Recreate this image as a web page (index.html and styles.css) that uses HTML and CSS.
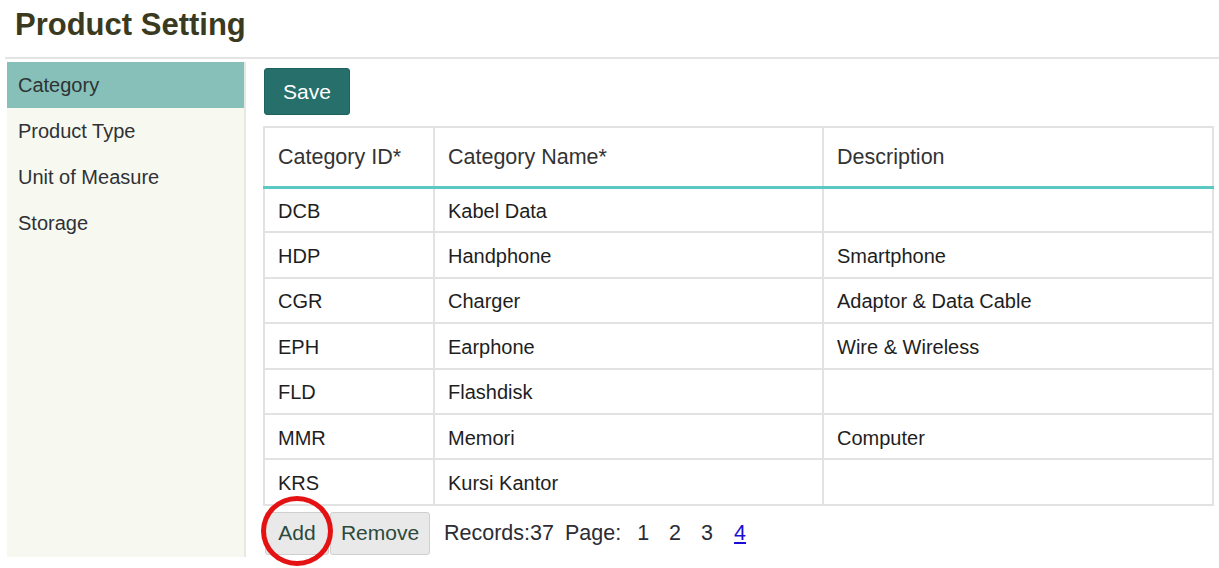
FILE: index.html
```html
<!DOCTYPE html>
<html>
<head>
<meta charset="utf-8">
<link rel="stylesheet" href="styles.css">
</head>
<body>
<div class="page">
  <header class="page-header">
    <h1 class="title">Product Setting</h1>
  </header>
  <div class="divider"></div>
  <div class="main">
    <nav class="sidebar">
      <div class="nav-item active">Category</div>
      <div class="nav-item">Product Type</div>
      <div class="nav-item">Unit of Measure</div>
      <div class="nav-item">Storage</div>
    </nav>
    <section class="content">
      <div class="toolbar">
        <button class="btn-save">Save</button>
      </div>
      <table class="grid">
        <colgroup>
          <col class="c1"><col class="c2"><col class="c3">
        </colgroup>
        <thead>
          <tr><th>Category ID*</th><th>Category Name*</th><th>Description</th></tr>
        </thead>
        <tbody>
          <tr><td>DCB</td><td>Kabel Data</td><td></td></tr>
          <tr><td>HDP</td><td>Handphone</td><td>Smartphone</td></tr>
          <tr><td>CGR</td><td>Charger</td><td>Adaptor &amp; Data Cable</td></tr>
          <tr><td>EPH</td><td>Earphone</td><td>Wire &amp; Wireless</td></tr>
          <tr><td>FLD</td><td>Flashdisk</td><td></td></tr>
          <tr><td>MMR</td><td>Memori</td><td>Computer</td></tr>
          <tr><td>KRS</td><td>Kursi Kantor</td><td></td></tr>
        </tbody>
      </table>
      <div class="footer-bar">
        <div class="add-wrap">
          <button class="btn-plain btn-add">Add</button>
          <span class="highlight-ring"></span>
        </div>
        <button class="btn-plain btn-remove">Remove</button>
        <span class="records">Records:37</span>
        <span class="page-label">Page:</span>
        <span class="pager">
          <span class="pg">1</span>
          <span class="pg">2</span>
          <span class="pg">3</span>
          <a class="pg current" href="#">4</a>
        </span>
      </div>
    </section>
  </div>
</div>
</body>
</html>
```

FILE: styles.css
```css
* { box-sizing: border-box; }

html, body {
  margin: 0;
  padding: 0;
  background: #ffffff;
  font-family: "Liberation Sans", Arial, sans-serif;
  color: #222;
}

.page {
  width: 1219px;
  height: 568px;
  overflow: hidden;
}

.page-header {
  height: 57px;
  padding: 4px 0 0 15px;
}

.title {
  margin: 0;
  font-size: 31px;
  line-height: 42px;
  font-weight: bold;
  color: #3a3a20;
}

.divider {
  margin-left: 5px;
  height: 2px;
  background: #e4e4e4;
}

.main {
  display: flex;
  padding-left: 7px;
  margin-top: 3px;
}

.sidebar {
  width: 239px;
  height: 495px;
  background: #f7f9f1;
  border-right: 2px solid #e6e9e1;
}

.nav-item {
  height: 46px;
  line-height: 46px;
  padding-left: 11px;
  font-size: 20px;
  color: #2f3136;
}

.nav-item.active {
  background: #86c0b9;
  color: #2e3334;
}

.content {
  margin-left: 17px;
  width: 949px;
  padding-top: 6px;
}

.toolbar {
  height: 47px;
  margin-bottom: 11px;
}

.btn-save {
  height: 47px;
  width: 86px;
  margin-left: 1px;
  border: 1px solid #1f625d;
  border-radius: 3px;
  background: #266f6a;
  color: #ffffff;
  font-family: "Liberation Sans", Arial, sans-serif;
  font-size: 21px;
  padding: 0;
}

.grid {
  width: 949px;
  border-collapse: collapse;
  border: 2px solid #e2e2e2;
  table-layout: fixed;
}

.grid col.c1 { width: 170px; }
.grid col.c2 { width: 389px; }
.grid col.c3 { width: 390px; }

.grid th {
  height: 60px;
  text-align: left;
  font-weight: normal;
  font-size: 21.5px;
  color: #333;
  padding: 2px 13px 0;
  border-right: 2px solid #e2e2e2;
  border-bottom: 3px solid #5cc8c3;
}

.grid td {
  height: 45.4px;
  padding: 3px 13px 0;
  font-size: 20px;
  color: #1e1e1e;
  border-right: 2px solid #e2e2e2;
  border-bottom: 2px solid #e2e2e2;
}

.footer-bar {
  display: flex;
  align-items: center;
  margin-top: 6px;
  padding-left: 2px;
  height: 43px;
}

.add-wrap {
  position: relative;
}

.btn-plain {
  height: 43px;
  border: 1px solid #cfcfcf;
  border-radius: 3px;
  background: #e9e9e9;
  color: #2c4a3c;
  font-family: "Liberation Sans", Arial, sans-serif;
  font-size: 21px;
  padding: 0;
}

.btn-add {
  width: 64px;
}

.btn-remove {
  width: 100px;
  margin-left: 1px;
}

.highlight-ring {
  position: absolute;
  left: -4px;
  top: -16px;
  width: 72px;
  height: 70px;
  border: 5px solid #e41212;
  border-radius: 50%;
}

.records {
  margin-left: 14px;
  font-size: 21.5px;
  color: #2c2c34;
}

.page-label {
  margin-left: 11px;
  font-size: 21.5px;
  color: #2c2c34;
}

.pager {
  display: flex;
  margin-left: 16px;
  gap: 20px;
}

.pg {
  font-size: 21.5px;
  color: #2c2c34;
}

.pg.current {
  color: #1a0dd6;
  text-decoration: underline;
  margin-left: 1px;
}
```
